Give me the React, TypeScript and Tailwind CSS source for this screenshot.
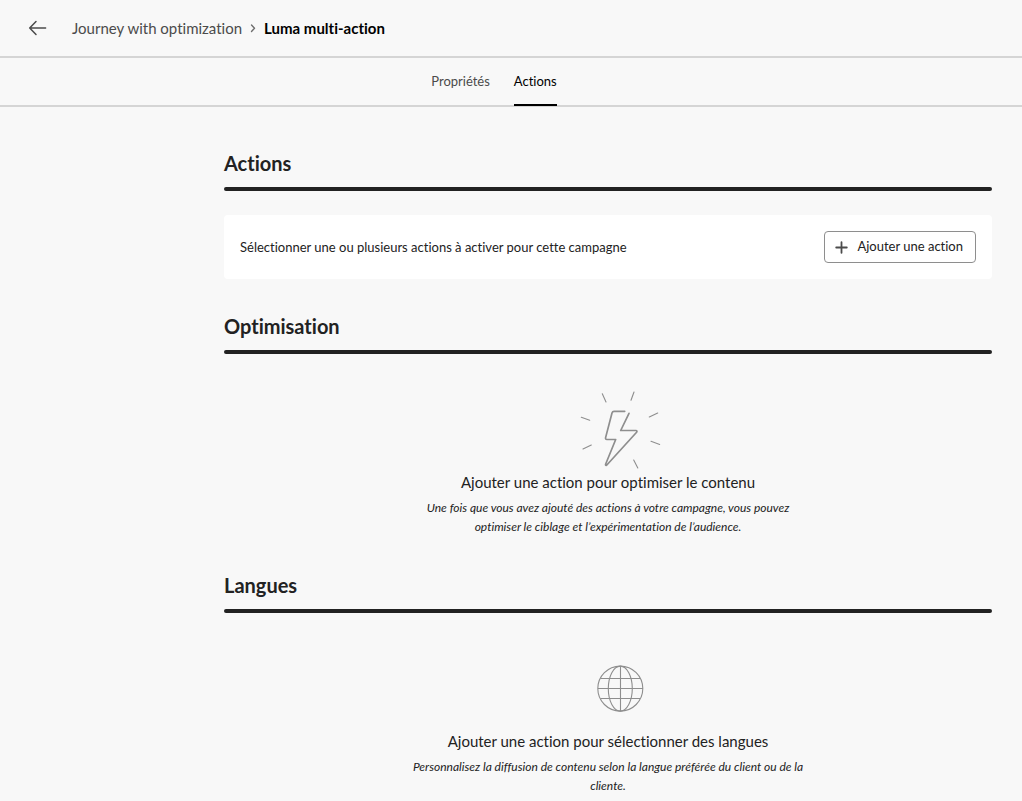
import type { ReactNode } from "react";

function BoltIllustration() {
  return (
    <svg width="100" height="80" viewBox="0 0 100 80" fill="none" stroke="#8e8e8e" strokeLinecap="round" strokeLinejoin="round" aria-hidden="true">
      <path strokeWidth="1.7" d="M59 23.3 50.7 40.5H65.8Q67.6 40.7 66.6 42.2L36.6 75.2Q35.2 75.8 35.6 74.2L45.7 49.5H37Q35.2 49.3 35.6 47.6L42 23Q42.5 21.3 44 21.3H54.7" />
      <path strokeWidth="1.1" d="M32.3 3.7 36 12M64 2 61 10.3M11.3 27.3 19.7 30.2M87.7 23 79.3 27M13 59 21.3 55M81 51.3 89.7 54.4M63.7 70 67.8 78" />
    </svg>
  );
}

function GlobeIllustration() {
  return (
    <svg width="100" height="80" viewBox="0 0 100 80" fill="none" stroke="#8e8e8e" strokeWidth="1.1" aria-hidden="true">
      <circle cx="50.3" cy="39.6" r="22.5" />
      <ellipse cx="50.3" cy="39.6" rx="12" ry="22.5" />
      <path d="M50.5 17V62M30.5 29.5H70M28 39.5H73M30.5 49.5H70" />
    </svg>
  );
}

function Section({ title, children }: { title: string; children: ReactNode }) {
  return (
    <section>
      <h2 className="mb-3 text-[20px] leading-6 font-bold text-[#222222]">{title}</h2>
      <div className="h-1 rounded-full bg-[#222222]" />
      {children}
    </section>
  );
}

function EmptyState({ icon, title, text }: { icon: ReactNode; title: string; text: string }) {
  return (
    <div className="flex flex-col items-center pt-9 pb-0.5 text-center">
      <div className="pl-6">{icon}</div>
      <h3 className="text-[15px] leading-6 text-[#222222]">{title}</h3>
      <p className="mt-1 max-w-[408px] text-[12px] leading-[19px] text-[#222222] italic">{text}</p>
    </div>
  );
}

export default function App() {
  return (
    <div className="min-h-screen bg-[#f8f8f8] font-['Lato','Noto_Sans',sans-serif] [font-variant-ligatures:none]">
      <header className="flex h-[58px] items-center border-b-2 border-[#d5d5d5] pl-7">
        <button type="button" aria-label="Retour" className="flex size-5 items-center justify-center">
          <svg width="20" height="20" viewBox="0 0 20 20" fill="none" stroke="#4b4b4b" strokeWidth="1.5" strokeLinecap="round" strokeLinejoin="round" aria-hidden="true">
            <path d="M8 3.5 1.7 10 8 16.5M1.7 10H17.6" />
          </svg>
        </button>
        <nav aria-label="Fil d’Ariane" className="ml-6 flex items-center gap-[7px] text-[15px] leading-6">
          <a href="#journey" className="text-[#4b4b4b]">Journey with optimization</a>
          <svg width="8" height="10" viewBox="0 0 8 10" fill="none" stroke="#6e6e6e" strokeWidth="1.4" strokeLinecap="round" strokeLinejoin="round" aria-hidden="true">
            <path d="M2.5 2 5.5 5.2 2.5 8.4" />
          </svg>
          <span aria-current="page" className="font-bold text-black">Luma multi-action</span>
        </nav>
      </header>

      <nav aria-label="Sections" className="flex h-[49px] items-stretch justify-center gap-6 border-b-2 border-[#d5d5d5] pr-[34px] text-[13px]">
        <a href="#proprietes" className="flex items-center text-[#4b4b4b]">Propriétés</a>
        <a href="#actions" aria-current="page" className="-mb-px flex items-center border-b-2 border-black pt-px text-black">Actions</a>
      </nav>

      <main className="flex flex-col gap-[35px] pt-11 pr-[30px] pb-1 pl-56">
        <Section title="Actions">
          <div className="mt-6 flex items-center justify-between rounded bg-white p-4">
            <p className="text-[13px] leading-5 text-[#222222]">Sélectionner une ou plusieurs actions à activer pour cette campagne</p>
            <button type="button" className="flex h-8 items-center gap-[9px] rounded border border-[#8e8e8e] pr-3 pl-[10px] text-[13px] text-[#222222]">
              <svg width="13" height="13" viewBox="0 0 13 13" fill="none" stroke="#4b4b4b" strokeWidth="1.8" strokeLinecap="round" aria-hidden="true">
                <path d="M6.5 1.2V11.8M1.2 6.5H11.8" />
              </svg>
              Ajouter une action
            </button>
          </div>
        </Section>
        <Section title="Optimisation">
          <EmptyState
            icon={<BoltIllustration />}
            title="Ajouter une action pour optimiser le contenu"
            text="Une fois que vous avez ajouté des actions à votre campagne, vous pouvez optimiser le ciblage et l’expérimentation de l’audience."
          />
        </Section>
        <Section title="Langues">
          <EmptyState
            icon={<GlobeIllustration />}
            title="Ajouter une action pour sélectionner des langues"
            text="Personnalisez la diffusion de contenu selon la langue préférée du client ou de la cliente."
          />
        </Section>
      </main>
    </div>
  );
}
